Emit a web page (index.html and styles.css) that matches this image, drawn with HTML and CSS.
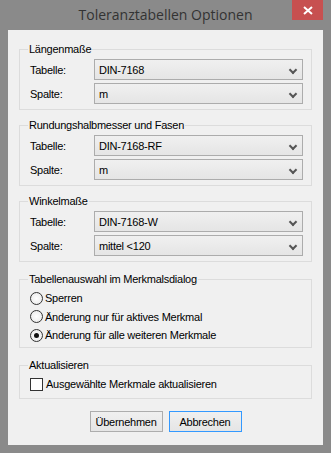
FILE: index.html
```html
<!DOCTYPE html>
<html lang="de">
<head>
    <meta charset="UTF-8">
    <title>Toleranztabellen Optionen</title>
    <link rel="stylesheet" href="styles.css">
</head>
<body>

    <div class="window">
        <div class="titlebar">
            <span class="title">Toleranztabellen Optionen</span>
            <button class="close-btn" aria-label="Schließen">
                <svg width="10" height="9" viewBox="0 0 10 9"><path d="M1 1 L9 8 M9 1 L1 8" stroke="#fff" stroke-width="2"/></svg>
            </button>
        </div>

        <div class="client">
            <!-- Längenmaße -->
            <fieldset class="group">
                <legend>Längenmaße</legend>
                <div class="row">
                    <span class="row-label">Tabelle:</span>
                    <div class="combo">DIN-7168<span class="arrow"></span></div>
                </div>
                <div class="row">
                    <span class="row-label">Spalte:</span>
                    <div class="combo">m<span class="arrow"></span></div>
                </div>
            </fieldset>

            <!-- Rundungshalbmesser -->
            <fieldset class="group">
                <legend>Rundungshalbmesser und Fasen</legend>
                <div class="row">
                    <span class="row-label">Tabelle:</span>
                    <div class="combo">DIN-7168-RF<span class="arrow"></span></div>
                </div>
                <div class="row">
                    <span class="row-label">Spalte:</span>
                    <div class="combo">m<span class="arrow"></span></div>
                </div>
            </fieldset>

            <!-- Winkelmaße -->
            <fieldset class="group">
                <legend>Winkelmaße</legend>
                <div class="row">
                    <span class="row-label">Tabelle:</span>
                    <div class="combo">DIN-7168-W<span class="arrow"></span></div>
                </div>
                <div class="row">
                    <span class="row-label">Spalte:</span>
                    <div class="combo">mittel &lt;120<span class="arrow"></span></div>
                </div>
            </fieldset>

            <!-- Tabellenauswahl -->
            <fieldset class="group options">
                <legend>Tabellenauswahl im Merkmalsdialog</legend>
                <label class="option"><span class="radio"></span>Sperren</label>
                <label class="option"><span class="radio"></span>Änderung nur für aktives Merkmal</label>
                <label class="option"><span class="radio checked"></span>Änderung für alle weiteren Merkmale</label>
            </fieldset>

            <!-- Aktualisieren -->
            <fieldset class="group options check-group">
                <legend>Aktualisieren</legend>
                <label class="option"><span class="checkbox"></span>Ausgewählte Merkmale aktualisieren</label>
            </fieldset>

            <div class="buttons">
                <button class="btn">Übernehmen</button>
                <button class="btn default">Abbrechen</button>
            </div>
        </div>
    </div>

</body>
</html>
```

FILE: styles.css
```css
/* General styles */
body {
    margin: 0;
    padding: 0;
    font-family: "Liberation Sans", Arial, sans-serif;
    font-size: 11px;
    letter-spacing: -0.25px;
    color: #000;
}

.window {
    width: 331px;
    height: 453px;
    background-color: #8a8a8a;
    display: flex;
    flex-direction: column;
    box-sizing: border-box;
    padding: 0 8px 8px 8px;
}

/* Title bar */
.titlebar {
    height: 30px;
    display: flex;
    justify-content: center;
    align-items: center;
    position: relative;
}

.title {
    font-family: "Open Sans", "Noto Sans", sans-serif;
    font-size: 14px;
    letter-spacing: 0;
    color: #333;
    margin-top: -1px;
}

.close-btn {
    position: absolute;
    top: 0;
    right: 0;
    width: 31px;
    height: 20px;
    border: none;
    padding: 0;
    background-color: #c75050;
    display: flex;
    justify-content: center;
    align-items: center;
}

/* Client area */
.client {
    flex: 1;
    background-color: #f0f0f0;
    padding: 13px 11px 0 11px;
    display: flex;
    flex-direction: column;
    gap: 9px;
}

.group {
    margin: 0;
    border: 1px solid #dcdcdc;
    padding: 3px 8px 5px 8px;
}

.group legend {
    padding: 0 1px;
    line-height: 13px;
}

.row {
    display: flex;
    align-items: center;
    padding-left: 2px;
}

.row + .row {
    margin-top: 3px;
}

.row-label {
    width: 64px;
}

.combo {
    flex: 1;
    height: 21px;
    box-sizing: border-box;
    border: 1px solid #acacac;
    background: linear-gradient(#f0f0f0, #e5e5e5);
    padding: 0 0 0 4px;
    display: flex;
    align-items: center;
    position: relative;
}

.arrow {
    position: absolute;
    right: 6px;
    top: 7px;
    width: 4px;
    height: 4px;
    border-right: 2px solid #555;
    border-bottom: 2px solid #555;
    transform: rotate(45deg);
}

/* Radio and checkbox options */
.options {
    margin-top: 2px;
    padding-top: 3px;
    padding-bottom: 3px;
}

.option {
    display: flex;
    align-items: center;
    height: 18.5px;
    padding-left: 2px;
}

.option:last-child {
    height: 18px;
}

.radio {
    width: 11px;
    height: 11px;
    border: 1px solid #333;
    border-radius: 50%;
    background: radial-gradient(#fff, #e6e6e6);
    margin-right: 2px;
    display: flex;
    justify-content: center;
    align-items: center;
}

.radio.checked::after {
    content: "";
    width: 5px;
    height: 5px;
    border-radius: 50%;
    background-color: #111;
}

.check-group {
    padding-bottom: 5px;
}

.checkbox {
    width: 11px;
    height: 11px;
    border: 1px solid #333;
    background-color: #fff;
    margin-right: 3px;
}

/* Buttons */
.buttons {
    display: flex;
    justify-content: center;
    gap: 6px;
    margin-top: 3px;
}

.btn {
    width: 73px;
    height: 21px;
    font-family: "Liberation Sans", Arial, sans-serif;
    font-size: 11px;
    letter-spacing: -0.25px;
    color: #000;
    border: 1px solid #adadad;
    background: linear-gradient(#f0f0f0, #e5e5e5);
    padding: 0;
}

.btn.default {
    border-color: #3399ff;
}
```
